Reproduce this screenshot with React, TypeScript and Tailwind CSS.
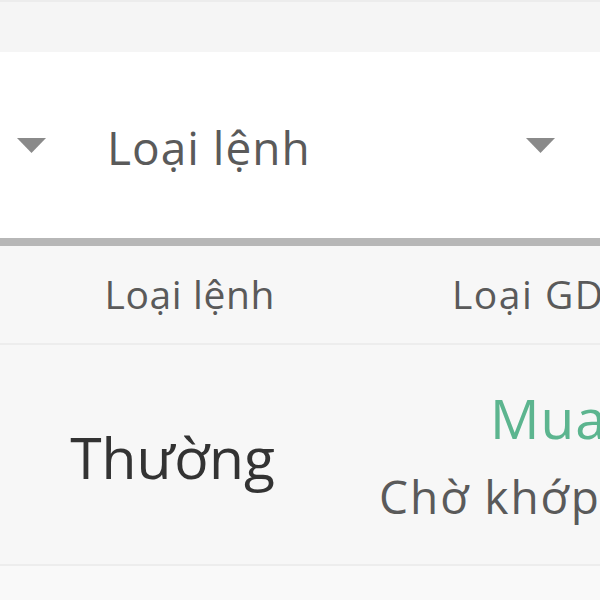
import React from "react";

function Tri() {
  return (
    <svg width="29" height="15" viewBox="0 0 29 15" className="shrink-0">
      <polygon points="0,0 29,0 14.5,15" fill="#8a8a8a" />
    </svg>
  );
}

export default function App() {
  return (
    <div className="w-[600px] h-[600px] overflow-hidden bg-[#f7f7f7] font-['Open_Sans',sans-serif]">
      <div className="h-[52px] bg-[#f5f5f5] border-t-2 border-[#ececec]" />
      <div className="h-[186px] bg-white flex items-center">
        <div className="pl-[17px] w-[107px] shrink-0 flex">
          <Tri />
        </div>
        <div className="flex-1 text-[46px] leading-none tracking-[1px] text-[#5a5a5a] pt-[3px]">Loại lệnh</div>
        <div className="pr-[45px] flex">
          <Tri />
        </div>
      </div>
      <div className="h-[8px] bg-[#b7b7b7]" />
      <div className="h-[99px] flex items-center border-b-2 border-[#ededed] whitespace-nowrap">
        <div className="w-[275px] shrink-0 text-right text-[39px] leading-none tracking-[0.6px] text-[#5a5a5a] pb-[2px]">Loại lệnh</div>
        <div className="pl-[177px] shrink-0 text-[39px] leading-none tracking-[1.5px] text-[#5a5a5a] pb-[2px]">Loại GD</div>
      </div>
      <div className="h-[221px] flex items-center border-b-2 border-[#ededed] whitespace-nowrap">
        <div className="w-[275px] shrink-0 text-right text-[57px] leading-none text-[#333333] pt-[6px]">Thường</div>
        <div className="pl-[104px] shrink-0 flex flex-col">
          <div className="pl-[111px] text-[55px] leading-none tracking-[1px] text-[#5cb58f]">Mua</div>
          <div className="text-[46px] leading-none tracking-[2px] text-[#5a5a5a] mt-[28px]">Chờ khớp</div>
        </div>
      </div>
      <div className="h-[40px] bg-[#f9f9f9]" />
    </div>
  );
}
